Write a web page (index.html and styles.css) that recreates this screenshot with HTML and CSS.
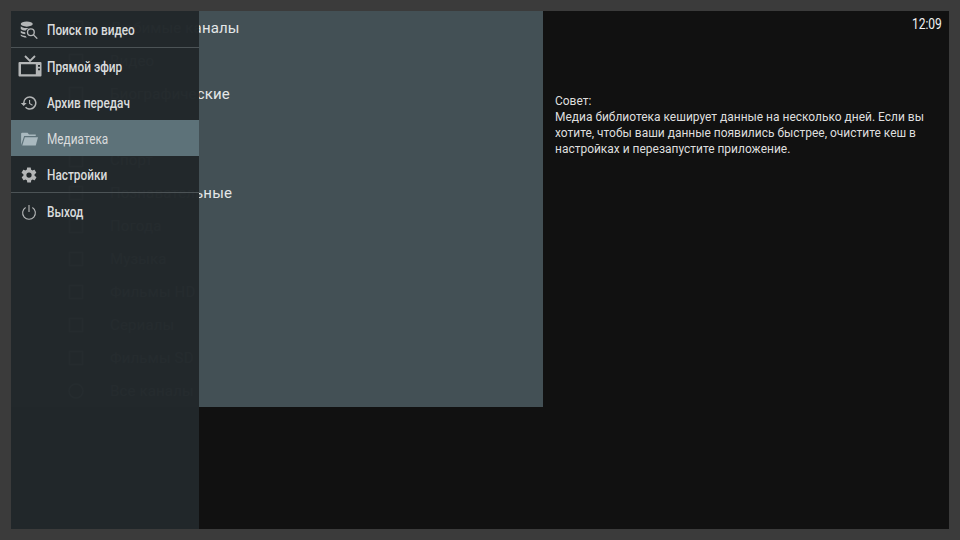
FILE: index.html
```html
<!DOCTYPE html>
<html lang="ru">
<head>
<meta charset="utf-8">
<title>Медиатека</title>
<link rel="stylesheet" href="styles.css">
</head>
<body>
<div class="screen">
  <main class="stage">
    <section class="list">
      <div class="row"><svg class="row-icon" viewBox="0 0 16 16"><rect x="1.5" y="1.5" width="13" height="13"/></svg><span>Любимые каналы</span></div>
      <div class="row"><svg class="row-icon" viewBox="0 0 16 16"><rect x="1.5" y="1.5" width="13" height="13"/></svg><span>Видео</span></div>
      <div class="row"><svg class="row-icon" viewBox="0 0 16 16"><rect x="1.5" y="1.5" width="13" height="13"/></svg><span>Биографические</span></div>
      <div class="row"><svg class="row-icon" viewBox="0 0 16 16"><rect x="1.5" y="1.5" width="13" height="13"/></svg><span>Новости</span></div>
      <div class="row"><svg class="row-icon" viewBox="0 0 16 16"><rect x="1.5" y="1.5" width="13" height="13"/></svg><span>Спорт</span></div>
      <div class="row"><svg class="row-icon" viewBox="0 0 16 16"><rect x="1.5" y="1.5" width="13" height="13"/></svg><span>Познавательные</span></div>
      <div class="row"><svg class="row-icon" viewBox="0 0 16 16"><rect x="1.5" y="1.5" width="13" height="13"/></svg><span>Погода</span></div>
      <div class="row"><svg class="row-icon" viewBox="0 0 16 16"><rect x="1.5" y="1.5" width="13" height="13"/></svg><span>Музыка</span></div>
      <div class="row"><svg class="row-icon" viewBox="0 0 16 16"><rect x="1.5" y="1.5" width="13" height="13"/></svg><span>Фильмы HD</span></div>
      <div class="row"><svg class="row-icon" viewBox="0 0 16 16"><rect x="1.5" y="1.5" width="13" height="13"/></svg><span>Сериалы</span></div>
      <div class="row"><svg class="row-icon" viewBox="0 0 16 16"><rect x="1.5" y="1.5" width="13" height="13"/></svg><span>Фильмы SD</span></div>
      <div class="row"><svg class="row-icon" viewBox="0 0 16 16"><circle cx="8" cy="8" r="7"/></svg><span>Все каналы</span></div>
    </section>
    <section class="info">
      <div class="clock">12:09</div>
      <p class="tip">Совет:<br>Медиа библиотека кеширует данные на несколько дней. Если вы хотите, чтобы ваши данные появились быстрее, очистите кеш в настройках и перезапустите приложение.</p>
    </section>
    <nav class="menu">
      <div class="item divided">
        <svg class="icon" viewBox="0 0 24 24"><ellipse cx="9" cy="4" rx="8" ry="3.500" class="fill"/><path class="fill" d="M1 7c1.500 1.600 4 2.300 7 2.400 1.500 0 2.500.1 4 0-2 .8-3.500 2-4.300 3.400C4.800 12.600 2.500 12 1 10.600zM1 13c1.400 1.200 3.500 1.700 6 1.900l.2 2.600C4.500 17.400 2.500 16.800 1 15.700zM1 18c1.500 1.200 3.700 1.800 6.500 1.900l1.600 2.100c-3.700 0-6.400-.6-8.100-2.300z"/><circle cx="14.500" cy="15" r="4.500" class="line"/><path class="line" d="M18 18.500l5 5"/></svg>
        <span class="label">Поиск по видео</span>
      </div>
      <div class="item">
        <svg class="icon tv" viewBox="0 0 24 22"><path class="line" d="M7 1l5 5 5-5"/><path class="fill" fill-rule="evenodd" d="M1.500 7h21a1 1 0 0 1 1 1v12.500a1 1 0 0 1-1 1h-21a1 1 0 0 1-1-1V8a1 1 0 0 1 1-1zM3 9.200v10h14.800v-10zM20 10v1.800h2V10zM20 13.500v1.800h2v-1.800z"/></svg>
        <span class="label">Прямой эфир</span>
      </div>
      <div class="item">
        <svg class="icon" viewBox="0 0 24 24"><path class="fill" d="M13 3a9 9 0 0 0-9 9H1l3.900 3.900L9 12H6a7 7 0 1 1 2.100 5l-1.400 1.400A9 9 0 1 0 13 3zm-1 5v5l4.300 2.500.7-1.200-3.500-2.100V8z"/></svg>
        <span class="label">Архив передач</span>
      </div>
      <div class="item active">
        <svg class="icon" viewBox="0 0 24 24"><path class="fill" d="M3 3.500h7l2 2.500h9v2H5.500L1.500 20V5a1.500 1.500 0 0 1 1.500-1.500z"/><path class="fill" d="M6.500 9.500H24l-3 11H3z"/></svg>
        <span class="label">Медиатека</span>
      </div>
      <div class="item divided">
        <svg class="icon" viewBox="0 0 24 24"><path class="fill" fill-rule="evenodd" d="M19.400 13c.1-.3.100-.7.100-1s0-.7-.1-1l2.100-1.600c.2-.2.200-.4.100-.6l-2-3.500c-.1-.2-.4-.3-.6-.2l-2.500 1c-.5-.4-1.100-.7-1.700-1l-.4-2.600c0-.2-.2-.4-.5-.4h-4c-.3 0-.5.200-.5.400l-.4 2.600c-.6.300-1.200.6-1.700 1l-2.500-1c-.2-.1-.5 0-.6.200l-2 3.500c-.1.200-.1.400.1.600L4.600 11c-.1.300-.1.700-.1 1s0 .7.100 1l-2.100 1.600c-.2.200-.2.400-.1.600l2 3.500c.1.200.4.300.6.200l2.500-1c.5.400 1.100.7 1.700 1l.4 2.600c0 .2.200.4.500.4h4c.3 0 .5-.2.500-.4l.4-2.600c.6-.3 1.200-.6 1.700-1l2.500 1c.2.100.5 0 .6-.2l2-3.500c.1-.2.100-.4-.1-.6zM12 15.500a3.500 3.500 0 1 1 0-7 3.500 3.500 0 0 1 0 7z"/></svg>
        <span class="label">Настройки</span>
      </div>
      <div class="item">
        <svg class="icon" viewBox="0 0 24 24"><path class="line thin" d="M12 2.500v9.500"/><path class="line thin" d="M7.500 6a8.500 8.500 0 1 0 9 0"/></svg>
        <span class="label">Выход</span>
      </div>
    </nav>
  </main>
</div>
</body>
</html>
```
FILE: styles.css
```css
* { box-sizing: border-box; }
html, body { margin: 0; height: 100%; }
body { font-family: Roboto, "Liberation Sans", sans-serif; background: #3a3a3a; }
.screen { width: 960px; height: 540px; padding: 11px; background: #3b3b3b; }
.stage { position: relative; display: flex; width: 938px; height: 518px; background: #111111; overflow: hidden; }
.list { flex: 0 0 532px; height: 396px; background: #435055; }
.row { display: flex; align-items: center; gap: 26px; height: 33px; padding-left: 57px; color: #e4e7e8; font-size: 15px; letter-spacing: .15px; }
.row-icon { flex: none; width: 16px; height: 16px; fill: none; stroke: #e4e7e8; stroke-width: 1.500; }
.info { flex: 0 0 406px; min-width: 0; position: relative; padding: 82px 0 0 12px; color: #dedede; }
.clock { position: absolute; top: 5px; right: 7px; font-size: 14px; color: #f2f2f2; transform: scaleX(.86); transform-origin: right center; }
.tip { margin: 0; width: 412px; font-size: 13px; line-height: 16px; transform: scaleX(.92); transform-origin: left top; }
.menu { position: absolute; top: 0; left: 0; bottom: 0; width: 188px; background: rgba(34, 40, 43, .986); }
.item { display: flex; align-items: center; gap: 9px; height: 36px; padding: 1px 0 0 9px; color: #dadcdd; font-size: 14px; font-weight: 500; }
.item.divided { height: 37px; padding-top: 2px; border-bottom: 1px solid #4c5356; }
.item:last-child { height: 37px; }
.item.active { background: #5d7279; font-weight: 400; }
.label { transform: scaleX(.845); transform-origin: left center; }
.icon { flex: none; width: 18px; height: 18px; }
.fill { fill: #b4b6b7; }
.line { fill: none; stroke: #b4b6b7; stroke-width: 1.800; }
.line.thin { stroke-width: 1.500; }
.icon.tv { width: 24px; height: 22px; margin: -2px -4px 0 -2px; }
.item.active .fill { fill: #a9b9bf; }
```
